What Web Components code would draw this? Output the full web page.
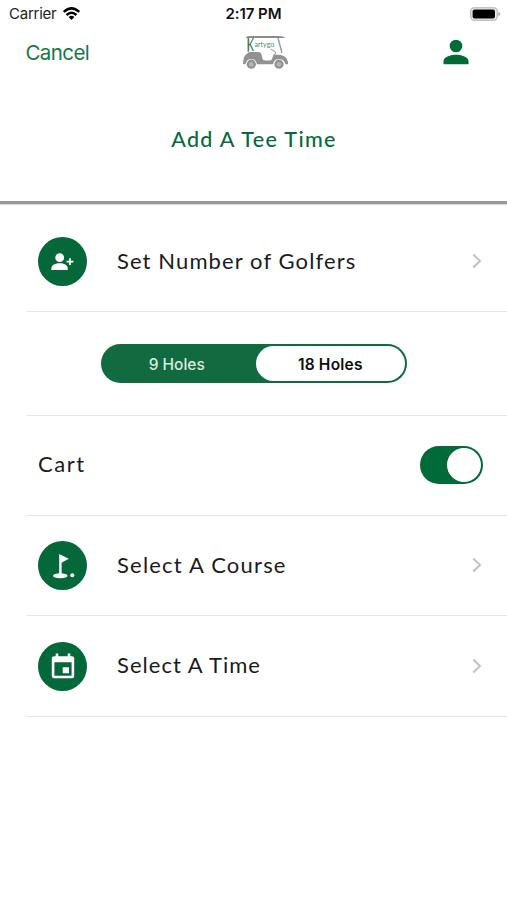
<!DOCTYPE html>
<html lang="en">
<head>
<meta charset="utf-8">
<meta name="viewport" content="width=device-width, initial-scale=1">
<title>Add A Tee Time</title>
<style>
html, body { margin: 0; background: #fff; }
body { height: 900px; overflow: hidden; }
</style>
</head>
<body>
<tee-time-screen></tee-time-screen>
<script>
function define(name, html) {
  const template = document.createElement('template');
  template.innerHTML = html;
  customElements.define(name, class extends HTMLElement {
    constructor() {
      super();
      this.attachShadow({ mode: 'open' }).appendChild(template.content.cloneNode(true));
    }
  });
}

define('status-bar', `
<style>
:host { display: grid; grid-template-columns: 1fr auto 1fr; align-items: center; height: 28px; padding: 0 9px 0 9px; box-sizing: border-box; font: 15px/18px Inter, sans-serif; color: #222; }
.left { display: flex; align-items: center; gap: 6px; letter-spacing: -.25px; }
.time { font-weight: 600; letter-spacing: -.05px; color: #111; }
.right { display: flex; justify-content: flex-end; margin-right: -3px; }
svg { display: block; }
</style>
<div class="left"><span>Carrier</span>
<svg width="19" height="14" viewBox="0 0 19 15"><g fill="none" stroke="#000" stroke-width="2.7"><path d="M1.2 5.2Q9.5-2.3 17.8 5.2"/><path d="M4.2 8.6Q9.5 3.8 14.8 8.6"/></g><path d="M6.4 10.6Q9.5 7.9 12.6 10.6L9.5 13.9Z"/></svg></div>
<span class="time">2:17 PM</span>
<div class="right"><svg width="32" height="15" viewBox="0 0 32 15"><rect x="1.7" y=".7" width="26.6" height="12.6" rx="4" fill="#eee" stroke="#c2c2c2" stroke-width="1.5"/><rect x="3.6" y="2.5" width="22.4" height="9" rx="2" fill="#000"/><path d="M29.3 4.7q2 .8 2 2.3t-2 2.3Z" fill="#aaa"/></svg></div>`);

define('cart-logo', `
<style>:host { display: block; } svg { display: block; overflow: visible; }</style>
<svg width="47" height="36" viewBox="0 0 47 36">
<path d="M4 2.3Q5 1 8 1H37Q42 1 43 3.1H4Z" fill="#8b8b8b"/>
<path d="M6.2 3V17M36 3L40 18" fill="none" stroke="#999" stroke-width="1.4"/>
<path d="M28.5 14L33.5 17 32.500 21" fill="none" stroke="#999" stroke-width="1"/>
<path d="M1 29Q1 21 5 18.7 6 17 8 17H17Q20 18 20.5 24 21 25.4 23 25.4H28Q30 25.4 30.4 23L31.5 19.5 39 20Q45 21.4 46 27V29.2H43.5Q42 24 37 24 32 24 31 29.2H15Q14 24 9.3 24 4.5 24 3.4 29.2Z" fill="#919191"/>
<circle cx="9.3" cy="29.2" r="4.6" fill="#929292"/><circle cx="37" cy="29.2" r="4.6" fill="#929292"/>
<circle cx="9.3" cy="29.2" r="2.3" fill="#b6b6b6"/><circle cx="37" cy="29.2" r="2.3" fill="#b6b6b6"/>
<text x="5" y="15.800" font-family="Lato, sans-serif" font-size="17.500" fill="#27794c" textLength="7" lengthAdjust="spacingAndGlyphs">K</text>
<text x="12.400" y="11.500" font-family="Lato, sans-serif" font-size="8.200" fill="#4b9068" textLength="20" lengthAdjust="spacingAndGlyphs">artygo</text>
</svg>`);

define('nav-bar', `
<style>
:host { display: grid; grid-template-columns: 204px auto 1fr; height: 49px; align-items: center; padding: 0 26px; box-sizing: border-box; }
.cancel { font: 20.5px/24px Inter, sans-serif; letter-spacing: -.6px; color: #177645; margin-left: -.5px; }
.logo { margin-left: 12px; margin-right: 1px; }
.profile { display: flex; justify-content: flex-end; padding-right: 12px; margin-top: -2px; }
</style>
<span class="cancel">Cancel</span>
<cart-logo class="logo"></cart-logo>
<div class="profile"><svg width="26" height="26" viewBox="0 0 26 26" fill="#006b37"><circle cx="13" cy="7" r="6.3"/><path d="M.5 25.3V22C.5 17.7 8.8 15.8 13 15.8S25.5 17.7 25.5 22V25.3Z"/></svg></div>`);

define('page-title', `
<style>
:host { display: flex; justify-content: center; height: 127px; box-sizing: border-box; padding-top: 48px; border-bottom: 3px solid #989898; box-shadow: 0 1px 1px #ddd; color: #08693c; font: 500 21.5px/28px Lato, sans-serif; letter-spacing: 1.35px; text-indent: 1px; }
</style><slot></slot>`);

define('list-row', `
<style>
:host { display: flex; align-items: center; height: var(--row-height, 100px); box-sizing: border-box; margin-left: 26px; padding: 0 24px 0 12px; border-bottom: 1px solid #e6e6e6; color: #1b1b1b; font: 22px/28px Lato, sans-serif; letter-spacing: var(--track, 1.2px); }
.label { flex: 1; display: flex; justify-content: var(--justify, flex-start); white-space: nowrap; padding-bottom: var(--lift, 2px); }
</style>
<slot name="icon"></slot><div class="label"><slot></slot></div><slot name="end"></slot>`);

define('icon-badge', `
<style>
:host { display: grid; place-items: center; width: 49px; height: 49px; margin-right: 30px; border-radius: 50%; background: #04683a; flex: none; }
</style><slot></slot>`);

define('row-chevron', `
<style>:host { display: block; padding-bottom: 1px; } svg { display: block; }</style>
<svg width="12" height="16" viewBox="0 0 12 16"><path d="M2.2 1.5L9 8 2.2 14.5" fill="none" stroke="#c2c2c2" stroke-width="2"/></svg>`);

define('holes-picker', `
<style>
:host { display: grid; grid-template-columns: 1fr 1fr; width: 306px; height: 39px; box-sizing: border-box; padding: 2px; border-radius: 20px; background: #126b40; font: 500 15.5px/37px Inter, sans-serif; letter-spacing: 0; text-align: center; color: #d5eddf; }
span { height: 35px; box-sizing: border-box; }
.off { padding-right: 3px; }
.on { background: #fff; color: #0c0c0c; border-radius: 18px; font-weight: 600; margin-left: 2px; letter-spacing: .2px; }
</style><span class="off">9 Holes</span><span class="on">18 Holes</span>`);

define('toggle-switch', `
<style>
:host { display: flex; justify-content: flex-end; width: 63px; height: 38px; box-sizing: border-box; padding: 2px; border-radius: 19px; background: #006a38; margin-bottom: 2px; }
i { width: 34px; height: 34px; border-radius: 50%; background: #fff; }
</style><i></i>`);

define('tee-time-screen', `
<style>
:host { display: block; width: 507px; height: 900px; background: #fff; }
svg { display: block; }
main { display: flex; flex-direction: column; }
.golfers { --row-height: 108px; --track: 1.1px; padding-top: 8px; }
.holes { --row-height: 104px; --justify: center; --lift: 0; padding-left: 0; padding-right: 25.5px; }
.cart { --track: 1.5px; --lift: 3px; }
.time { --row-height: 101px; --track: 1.03px; }
</style>
<status-bar></status-bar>
<nav-bar></nav-bar>
<page-title>Add A Tee Time</page-title>
<main>
<list-row class="golfers"><icon-badge slot="icon"><svg width="25" height="18" viewBox="0 0 25 18" fill="#fff"><circle cx="9.7" cy="4.7" r="4.4"/><path d="M1.3 17V15.8C1.3 12 5.5 10.3 9.7 10.3S17.8 12 17.8 15.8V17Z"/><path d="M20 5.2V12M16.6 8.6H23.4" stroke="#fff" stroke-width="1.7"/></svg></icon-badge>Set Number of Golfers<row-chevron slot="end"></row-chevron></list-row>
<list-row class="holes"><holes-picker></holes-picker></list-row>
<list-row class="cart">Cart<toggle-switch slot="end"></toggle-switch></list-row>
<list-row><icon-badge slot="icon"><svg width="25" height="26" viewBox="0 0 25 26" fill="#fff"><ellipse cx="10.3" cy="22.8" rx="7.3" ry="2.5"/><path d="M9.2 1L18.8 5.8 11.6 9.8V22H9.2Z"/><circle cx="22.3" cy="22.2" r="2"/></svg></icon-badge>Select A Course<row-chevron slot="end"></row-chevron></list-row>
<list-row class="time"><icon-badge slot="icon"><svg width="24" height="26" viewBox="0 0 24 26"><path fill="#fff" fill-rule="evenodd" d="M3 3.3H4.7V.5H7.3V3.3H16.7V.5H19.3V3.3H21Q23.2 3.3 23.2 5.5V23Q23.2 25.3 21 25.3H3Q.8 25.3.8 23V5.5Q.8 3.3 3 3.3ZM3.4 9.3V22.8H20.6V9.3ZM11.7 14.2H18V20.3H11.7Z"/></svg></icon-badge>Select A Time<row-chevron slot="end"></row-chevron></list-row>
</main>`);
</script>
</body>
</html>
